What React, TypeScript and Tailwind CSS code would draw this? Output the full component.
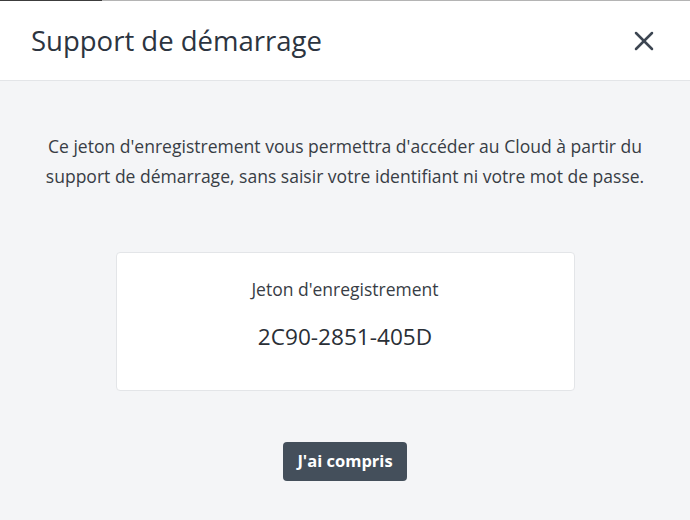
import { X } from 'lucide-react';

export default function App() {
  return (
    <div className="w-[690px] h-[520px] flex flex-col bg-[#f4f5f7] font-['Open_Sans',sans-serif] overflow-hidden">
      <div className="flex h-px shrink-0">
        <div className="w-[102px] bg-[#3c3c3c]" />
        <div className="flex-1 bg-[#b4b4b4]" />
      </div>
      <div className="h-[80px] shrink-0 bg-white border-b border-[#e3e5e8] flex items-center justify-between pl-[31px] pr-[30px]">
        <h1 className="text-[27.5px] text-[#2c3440] pt-[1px]">Support de démarrage</h1>
        <button className="text-[#3d4652] pt-[1px]">
          <X className="h-[32px] w-[32px]" strokeWidth={1.9} />
        </button>
      </div>
      <div className="flex flex-col items-center">
        <p className="mt-[50px] text-center text-[17.55px] leading-[30px] text-[#383d45] w-[640px]">
          Ce jeton d'enregistrement vous permettra d'accéder au Cloud à partir du support de démarrage, sans saisir votre identifiant ni votre mot de passe.
        </p>
        <div className="mt-[61px] w-[459px] h-[139px] bg-white border border-[#e3e5e8] rounded-[4px] flex flex-col items-center">
          <div className="mt-[23px] text-[17.5px] leading-[26px] text-[#383d45]">Jeton d'enregistrement</div>
          <div className="mt-[19px] text-[22.6px] leading-[32px] text-[#2a2f36]">2C90-2851-405D</div>
        </div>
        <button className="mt-[51px] h-[39px] px-[14px] rounded-[4px] bg-[#444f5b] text-white text-[16.5px] font-bold">
          J'ai compris
        </button>
      </div>
    </div>
  );
}
